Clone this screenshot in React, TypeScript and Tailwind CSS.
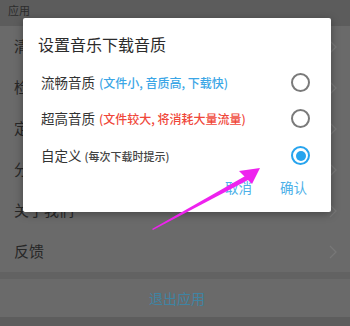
import React from "react";

const font = { fontFamily: '"Noto Sans CJK SC", "Noto Sans", sans-serif' };

function Chevron() {
  return (
    <svg width="8" height="14" viewBox="0 0 8 14" className="shrink-0">
      <path d="M1 1 L7 7 L1 13" fill="none" stroke="#787878" strokeWidth="1.2" />
    </svg>
  );
}

function Radio({ checked }: { checked?: boolean }) {
  return checked ? (
    <div className="w-[19px] h-[19px] rounded-full border-2 border-[#27a4ee] flex items-center justify-center">
      <div className="w-[10px] h-[10px] rounded-full bg-[#27a4ee]" />
    </div>
  ) : (
    <div className="w-[19px] h-[19px] rounded-full border-2 border-[#7a7a7a]" />
  );
}

export default function App() {
  const items = ["清除缓存", "检查更新", "定时关闭", "分享应用", "关于我们", "反馈"];
  return (
    <div className="relative w-[350px] h-[326px] overflow-hidden bg-[#5d5d5d]" style={font}>
      <div className="h-[26px] flex items-start pt-[2px] pl-[8px] text-[11px] text-[#2c2c2c] bg-[#5c5c5c]">应用</div>
      <div className="bg-[#6a6a6a]">
        {items.map((t) => (
          <div key={t} className="h-[41px] flex items-center justify-between pl-[14px] pr-[13px]">
            <span className="text-[15px] text-[#272727]">{t}</span>
            <Chevron />
          </div>
        ))}
      </div>
      <div className="h-[7px] bg-[#626262]" />
      <div className="h-[38px] bg-[#6a6a6a] flex items-center justify-center pl-[4px] text-[14px] text-[#3f84a3]">退出应用</div>

      <div className="absolute left-[23px] top-[18px] w-[308px] h-[194px] bg-white rounded-[2px] shadow-[0_2px_8px_rgba(0,0,0,0.35)] flex flex-col">
        <div className="pl-[15px] pt-[14px] h-[46px] text-[16px] text-[#2b2b2b] leading-[24px]">设置音乐下载音质</div>
        <div className="flex flex-col pl-[18px] pr-[21px]">
          <div className="h-[36px] flex items-center justify-between">
            <div className="flex items-baseline">
              <span className="text-[13.5px] text-[#333]">流畅音质</span>
              <span className="text-[12px] font-medium text-[#3ba6e6] ml-[4px]">(文件小, 音质高, 下载快)</span>
            </div>
            <Radio />
          </div>
          <div className="h-[37px] flex items-center justify-between">
            <div className="flex items-baseline">
              <span className="text-[13.5px] text-[#333]">超高音质</span>
              <span className="text-[12px] font-medium text-[#f0473a] ml-[4px]">(文件较大, 将消耗大量流量)</span>
            </div>
            <Radio />
          </div>
          <div className="h-[37px] flex items-center justify-between">
            <div className="flex items-baseline">
              <span className="text-[13.5px] text-[#333]">自定义</span>
              <span className="text-[11px] font-medium text-[#444] ml-[3px]">(每次下载时提示)</span>
            </div>
            <Radio checked />
          </div>
        </div>
        <div className="flex justify-end items-center gap-[28px] pr-[24px] h-[26px] text-[13.5px] text-[#4cb0e8]">
          <span>取消</span>
          <span>确认</span>
        </div>
      </div>

      <svg className="absolute left-0 top-0 pointer-events-none" width="350" height="326" viewBox="0 0 350 326">
        <polygon points="152,229 247,175 250,179 153,230" fill="#ee22ee" />
        <polygon points="260,168 239,171 252,184" fill="#ee22ee" />
      </svg>
    </div>
  );
}
